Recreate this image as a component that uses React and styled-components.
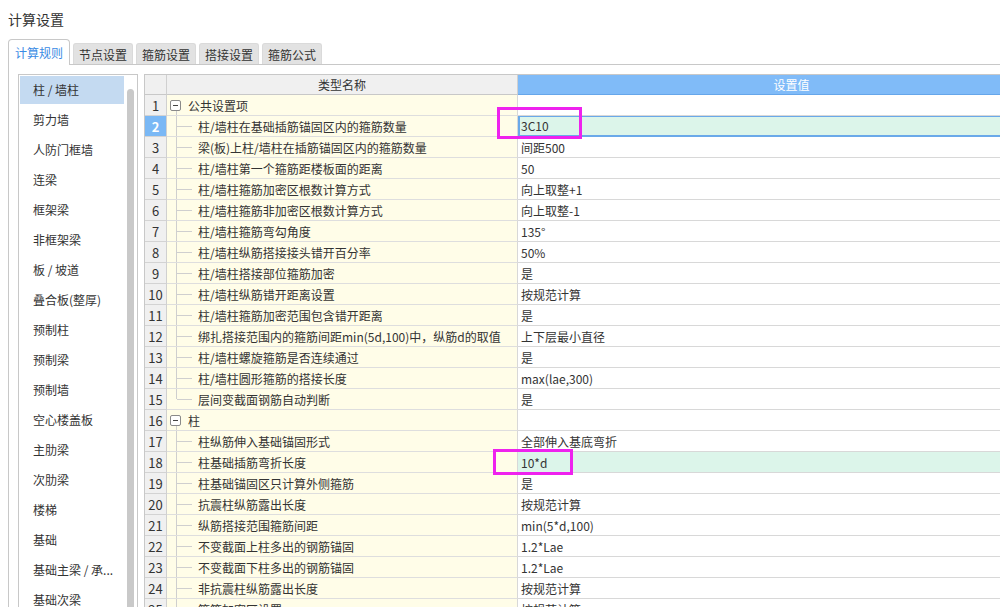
import React from 'react';
import styled, { createGlobalStyle, css } from 'styled-components';

const Global = createGlobalStyle`
  html, body { margin: 0; padding: 0; background: #fff; overflow: hidden; }
  body {
    font-family: "Noto Sans CJK SC", "Microsoft YaHei", "Noto Sans", sans-serif;
    color: #333;
  }
`;

const Page = styled.div`
  position: relative;
  width: 1000px;
  height: 607px;
  overflow: hidden;
  box-sizing: border-box;
  padding: 9px 0 0 8px;
`;

const Title = styled.div`
  font-size: 14px;
  line-height: 20px;
  height: 20px;
  color: #333;
`;

const TabBar = styled.div`
  margin-top: 10px;
  display: flex;
  align-items: flex-end;
  gap: 3px;
  height: 26px;
  width: 1100px;
  box-sizing: border-box;
  border-bottom: 1px solid #c8c8c8;
`;

const Tab = styled.div`
  box-sizing: border-box;
  width: 60px;
  height: 21px;
  display: flex;
  align-items: center;
  justify-content: center;
  font-size: 12px;
  color: #333;
  background: #e2e2e2;
  border: 1px solid #dadada;
  border-bottom: none;
  border-radius: 3px 3px 0 0;
  ${(p) =>
    p.$active &&
    css`
      width: 62px;
      height: 26px;
      margin-bottom: -1px;
      background: #fff;
      color: #3a8be4;
      border-color: #c8c8c8;
      border-radius: 4px 4px 0 0;
      position: relative;
      z-index: 1;
      padding-bottom: 1px;
    `}
`;

const Content = styled.div`
  display: flex;
  gap: 6px;
  border-left: 1px solid #c8c8c8;
  padding: 9px 0 0 9px;
  height: 560px;
  box-sizing: border-box;
`;

const SidePanel = styled.div`
  box-sizing: border-box;
  flex: 0 0 120px;
  width: 120px;
  height: 560px;
  border: 1px solid #c8c8c8;
  display: flex;
`;

const List = styled.div`
  width: 104px;
  padding: 1px 0 0 1px;
`;

const ListItem = styled.div`
  height: 28px;
  line-height: 28px;
  margin-bottom: 2px;
  padding-left: 13px;
  font-size: 12px;
  color: #333;
  white-space: nowrap;
  overflow: hidden;
  background: ${(p) => (p.$selected ? '#c4daf1' : 'transparent')};
`;

const ScrollTrack = styled.div`
  flex: 0 0 13px;
  padding-top: 14px;
`;

const ScrollThumb = styled.div`
  width: 7px;
  margin-left: 3px;
  height: 600px;
  background: #c9c9c9;
  border-radius: 4px 4px 0 0;
`;

const Table = styled.div`
  flex: 0 0 auto;
  width: 922px;
  border-left: 1px solid #c8c8c8;
  border-top: 1px solid #c8c8c8;
  box-sizing: border-box;
`;

const GridRow = styled.div`
  display: grid;
  grid-template-columns: 22px 351px 548px;
  height: ${(p) => (p.$header ? '20px' : '21px')};
`;

const HeadCell = styled.div`
  box-sizing: border-box;
  display: flex;
  align-items: center;
  justify-content: center;
  font-size: 12px;
  background: ${(p) => (p.$blue ? '#80bbf8' : '#f0f0f0')};
  color: ${(p) => (p.$blue ? '#fff' : '#333')};
  border-right: 1px solid ${(p) => (p.$blue ? '#6aa8ea' : '#d0d0d0')};
  border-bottom: 1px solid ${(p) => (p.$blue ? '#66a6ea' : '#c8c8c8')};
`;

const NumCell = styled.div`
  box-sizing: border-box;
  display: flex;
  align-items: center;
  justify-content: center;
  font-size: 13px;
  background: ${(p) => (p.$selected ? '#7ab8f5' : '#f0f0f0')};
  color: ${(p) => (p.$selected ? '#fff' : '#333')};
  font-weight: ${(p) => (p.$selected ? 700 : 400)};
  border-right: 1px solid #d0d0d0;
  border-bottom: 1px solid #d3d3d3;
`;

const NameCell = styled.div`
  box-sizing: border-box;
  display: flex;
  align-items: stretch;
  background: #fffde8;
  border-right: 1px solid #d8d8d8;
  border-bottom: 1px solid #dedede;
  font-size: 12px;
  white-space: nowrap;
  overflow: hidden;
`;

const Guide = styled.span`
  flex: 0 0 16px;
  margin-left: 9px;
  display: flex;
  align-items: center;
  box-sizing: border-box;
  ${(p) =>
    p.$last
      ? css`
          background: linear-gradient(#cfcfcf, #cfcfcf) left top / 1px 50% no-repeat;
          padding-left: 1px;
        `
      : css`
          border-left: 1px solid #cfcfcf;
        `}
  &::after {
    content: '';
    width: 15px;
    height: 1px;
    background: #cfcfcf;
  }
`;

const Toggle = styled.span`
  position: relative;
  align-self: center;
  flex: 0 0 11px;
  width: 11px;
  height: 11px;
  margin-left: 3px;
  box-sizing: border-box;
  border: 1px solid #8a8a8a;
  border-radius: 2px;
  background: #fff;
  display: flex;
  align-items: center;
  justify-content: center;
  &::before {
    content: '';
    width: 5px;
    height: 1px;
    background: #444;
  }
  &::after {
    content: '';
    position: absolute;
    left: 5px;
    top: 10px;
    width: 1px;
    height: 6px;
    background: #cfcfcf;
  }
`;

const NameText = styled.span`
  display: flex;
  align-items: center;
  margin-left: ${(p) => (p.$group ? '7px' : '6px')};
  color: #333;
`;

const ValueCell = styled.div`
  box-sizing: border-box;
  display: flex;
  align-items: center;
  padding-left: 3px;
  font-size: 12px;
  color: #333;
  white-space: nowrap;
  background: ${(p) => (p.$green ? '#dcf5ea' : '#fff')};
  border-right: 1px solid #d8d8d8;
  border-bottom: 1px solid #d8d8d8;
  ${(p) =>
    p.$selected &&
    css`
      border-bottom: 2px solid #6aa9e9;
      box-shadow: inset 0 1px 0 #6aa9e9, inset 2px 0 0 #6aa9e9;
    `}
`;

const Mark = styled.div`
  position: absolute;
  box-sizing: border-box;
  left: ${(p) => p.$x}px;
  top: ${(p) => p.$y}px;
  width: ${(p) => p.$w}px;
  height: ${(p) => p.$h}px;
  border: 3px solid #ee22ee;
  pointer-events: none;
`;

const tabs = ['计算规则', '节点设置', '箍筋设置', '搭接设置', '箍筋公式'];

const sideItems = [
  '柱 / 墙柱',
  '剪力墙',
  '人防门框墙',
  '连梁',
  '框架梁',
  '非框架梁',
  '板 / 坡道',
  '叠合板(整厚)',
  '预制柱',
  '预制梁',
  '预制墙',
  '空心楼盖板',
  '主肋梁',
  '次肋梁',
  '楼梯',
  '基础',
  '基础主梁 / 承...',
  '基础次梁',
  '砌体结构',
];

const rows = [
  { group: true, name: '公共设置项', value: '' },
  { name: '柱/墙柱在基础插筋锚固区内的箍筋数量', value: '3C10', selected: true, green: true },
  { name: '梁(板)上柱/墙柱在插筋锚固区内的箍筋数量', value: '间距500' },
  { name: '柱/墙柱第一个箍筋距楼板面的距离', value: '50' },
  { name: '柱/墙柱箍筋加密区根数计算方式', value: '向上取整+1' },
  { name: '柱/墙柱箍筋非加密区根数计算方式', value: '向上取整-1' },
  { name: '柱/墙柱箍筋弯勾角度', value: '135°' },
  { name: '柱/墙柱纵筋搭接接头错开百分率', value: '50%' },
  { name: '柱/墙柱搭接部位箍筋加密', value: '是' },
  { name: '柱/墙柱纵筋错开距离设置', value: '按规范计算' },
  { name: '柱/墙柱箍筋加密范围包含错开距离', value: '是' },
  { name: '绑扎搭接范围内的箍筋间距min(5d,100)中，纵筋d的取值', value: '上下层最小直径' },
  { name: '柱/墙柱螺旋箍筋是否连续通过', value: '是' },
  { name: '柱/墙柱圆形箍筋的搭接长度', value: 'max(lae,300)' },
  { name: '层间变截面钢筋自动判断', value: '是', last: true },
  { group: true, name: '柱', value: '' },
  { name: '柱纵筋伸入基础锚固形式', value: '全部伸入基底弯折' },
  { name: '柱基础插筋弯折长度', value: '10*d', green: true },
  { name: '柱基础锚固区只计算外侧箍筋', value: '是' },
  { name: '抗震柱纵筋露出长度', value: '按规范计算' },
  { name: '纵筋搭接范围箍筋间距', value: 'min(5*d,100)' },
  { name: '不变截面上柱多出的钢筋锚固', value: '1.2*Lae' },
  { name: '不变截面下柱多出的钢筋锚固', value: '1.2*Lae' },
  { name: '非抗震柱纵筋露出长度', value: '按规范计算' },
  { name: '箍筋加密区设置', value: '按规范计算' },
];

export default function App() {
  return (
    <>
      <Global />
      <Page>
        <Title>计算设置</Title>
        <TabBar>
          {tabs.map((t, i) => (
            <Tab key={t} $active={i === 0}>
              {t}
            </Tab>
          ))}
        </TabBar>
        <Content>
          <SidePanel>
            <List>
              {sideItems.map((s, i) => (
                <ListItem key={s} $selected={i === 0}>
                  {s}
                </ListItem>
              ))}
            </List>
            <ScrollTrack>
              <ScrollThumb />
            </ScrollTrack>
          </SidePanel>
          <Table>
            <GridRow $header>
              <HeadCell />
              <HeadCell>类型名称</HeadCell>
              <HeadCell $blue>设置值</HeadCell>
            </GridRow>
            {rows.map((r, i) => (
              <GridRow key={i}>
                <NumCell $selected={r.selected}>{i + 1}</NumCell>
                <NameCell>
                  {r.group ? <Toggle /> : <Guide $last={r.last} />}
                  <NameText $group={r.group}>{r.name}</NameText>
                </NameCell>
                <ValueCell $green={r.green} $selected={r.selected}>
                  {r.value}
                </ValueCell>
              </GridRow>
            ))}
          </Table>
        </Content>
        <Mark $x={497} $y={107} $w={85} $h={32} />
        <Mark $x={493} $y={449} $w={80} $h={26} />
      </Page>
    </>
  );
}
